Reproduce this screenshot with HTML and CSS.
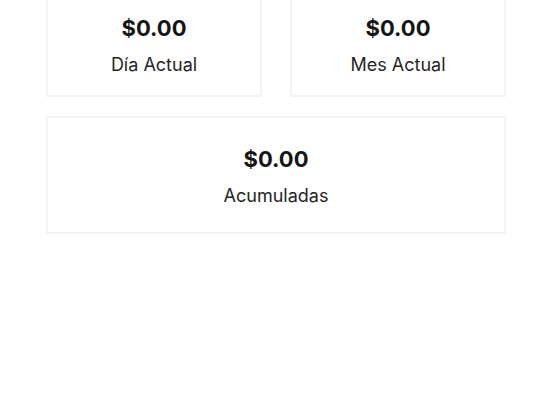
FILE: index.html
```html
<!DOCTYPE html>
<html lang="es">
<head>
<meta charset="utf-8">
<title>Ganancias</title>
<link rel="stylesheet" href="styles.css">
</head>
<body>
<main class="stats">
  <div class="stats-row">
    <section class="card card--short">
      <div class="amount">$0.00</div>
      <div class="label">Día Actual</div>
    </section>
    <section class="card card--short">
      <div class="amount">$0.00</div>
      <div class="label">Mes Actual</div>
    </section>
  </div>
  <section class="card">
    <div class="amount">$0.00</div>
    <div class="label">Acumuladas</div>
  </section>
</main>
</body>
</html>
```

FILE: styles.css
```css
html, body {
  margin: 0;
  padding: 0;
  background: #ffffff;
}

body {
  font-family: Inter, "Noto Sans", "Liberation Sans", sans-serif;
  color: #1a1a1a;
  overflow: hidden;
}

.stats {
  display: flex;
  flex-direction: column;
  gap: 19px;
  padding: 0 46px;
  margin-top: -15px;
}

.stats-row {
  display: grid;
  grid-template-columns: 1fr 1fr;
  gap: 28px;
}

.card {
  display: flex;
  flex-direction: column;
  align-items: center;
  gap: 11px;
  padding: 27px 16px 24px;
  border: 2px solid #f1f3f5;
  background: #ffffff;
}

.card--short {
  padding-bottom: 18px;
}

.amount {
  font-size: 22px;
  line-height: 28px;
  font-weight: 700;
  color: #151515;
}

.label {
  font-size: 18px;
  line-height: 24px;
  font-weight: 400;
  color: #262626;
}
```
